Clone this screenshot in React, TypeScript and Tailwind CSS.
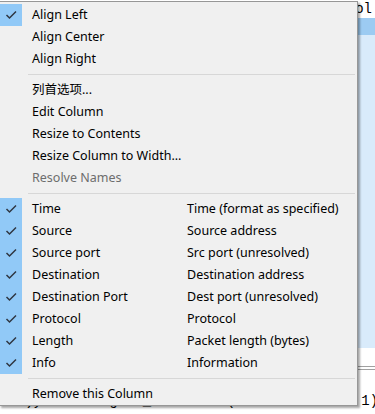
import React from 'react';

type Item = { label: string; desc?: string; checked?: boolean; disabled?: boolean };
type Entry = Item | 'sep';

const entries: Entry[] = [
  { label: 'Align Left', checked: true },
  { label: 'Align Center' },
  { label: 'Align Right' },
  'sep',
  { label: '列首选项...' },
  { label: 'Edit Column' },
  { label: 'Resize to Contents' },
  { label: 'Resize Column to Width...' },
  { label: 'Resolve Names', disabled: true },
  'sep',
  { label: 'Time', desc: 'Time (format as specified)', checked: true },
  { label: 'Source', desc: 'Source address', checked: true },
  { label: 'Source port', desc: 'Src port (unresolved)', checked: true },
  { label: 'Destination', desc: 'Destination address', checked: true },
  { label: 'Destination Port', desc: 'Dest port (unresolved)', checked: true },
  { label: 'Protocol', desc: 'Protocol', checked: true },
  { label: 'Length', desc: 'Packet length (bytes)', checked: true },
  { label: 'Info', desc: 'Information', checked: true },
  'sep',
  { label: 'Remove this Column' },
];

function Check() {
  return (
    <svg width="22" height="22" viewBox="0 0 22 22">
      <path d="M6.5 11 L9.5 14 L16 7.5" fill="none" stroke="#2f3640" strokeWidth="1.5" />
    </svg>
  );
}

function MenuRow({ item }: { item: Item }) {
  return (
    <div className="flex h-[22px] items-center">
      <div className={item.checked ? 'h-full w-[22px] bg-[#91c9f7]' : 'h-full w-[22px]'}>
        {item.checked && <Check />}
      </div>
      <div className={item.disabled ? 'w-[165px] pl-[10px] pt-px text-[#6d6d6d]' : 'w-[165px] pl-[10px] pt-px text-black'}>
        {item.label}
      </div>
      {item.desc && <div className="pt-px text-black">{item.desc}</div>}
    </div>
  );
}

export default function App() {
  return (
    <div
      className="relative h-[414px] w-[375px] overflow-hidden bg-white"
      style={{ fontFamily: '"Noto Sans", "Noto Sans CJK SC", sans-serif' }}
    >
      {/* packet list behind the menu */}
      <div className="flex flex-col" style={{ fontFamily: '"Liberation Mono", monospace' }}>
        <div className="flex h-[18px] items-center justify-end pr-[3px] text-[14px] text-black">Protocol</div>
        <div className="h-[17px] bg-[#9ccbf2]" />
        <div className="h-[313px] bg-[#d9ebfb]" />
        <div className="h-[18px] bg-white" />
        <div className="h-[4px] border-y border-[#a0a0a0]" />
        <div className="h-[22px]" />
        <div className="whitespace-pre text-[14px] leading-[18px] text-black">
          {'   )y        g   _         (               1)'}
        </div>
      </div>

      {/* context menu */}
      <div className="absolute left-[-1px] top-[1px] w-[359px] border border-[#979797] bg-[#f0f0f0] pt-[2px] text-[12.5px] shadow-[2px_2px_2px_rgba(0,0,0,0.35)]">
        {entries.map((e, i) =>
          e === 'sep' ? (
            <div key={i} className="flex h-[9px] items-center">
              <div className="ml-[28px] mr-[2px] h-px flex-1 bg-[#d7d7d7]" />
            </div>
          ) : (
            <MenuRow key={i} item={e} />
          )
        )}
      </div>
    </div>
  );
}
